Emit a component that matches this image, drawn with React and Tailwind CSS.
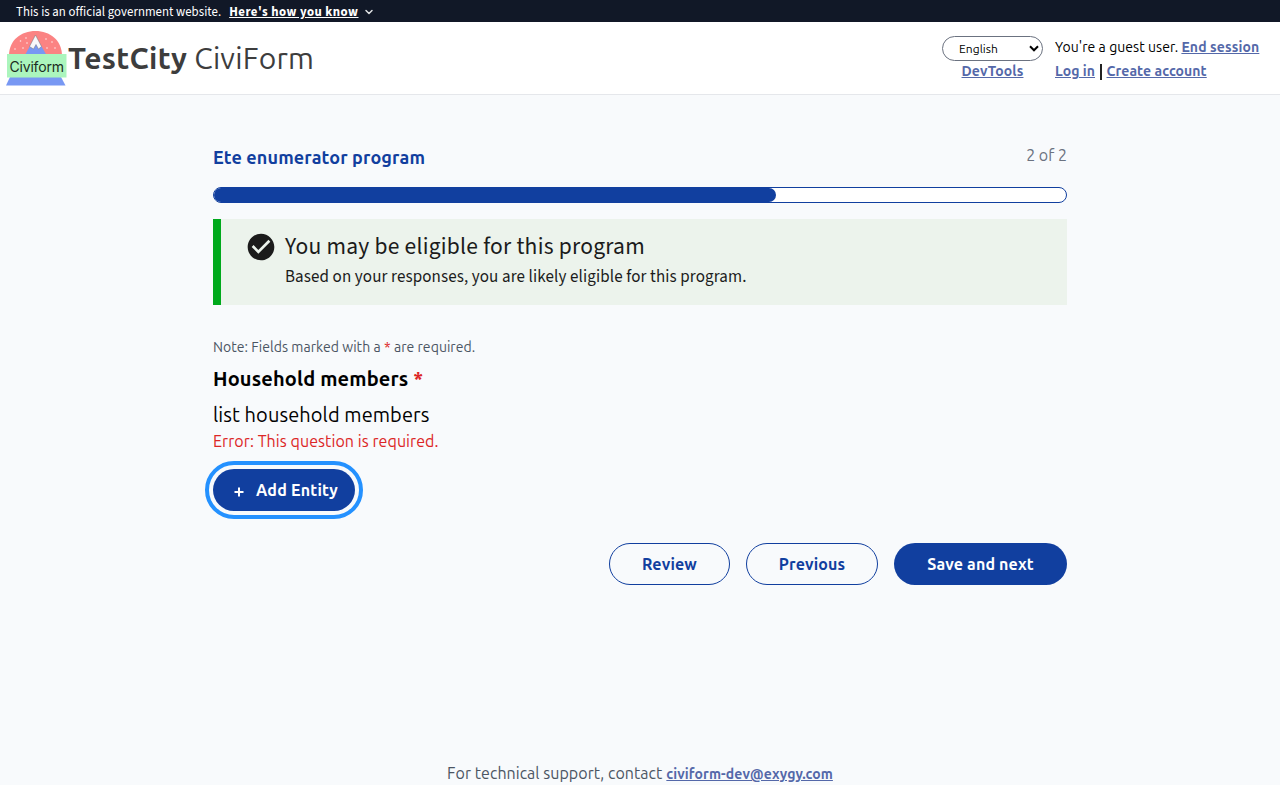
import { ChevronDown } from "lucide-react";

const source = "font-['Source_Sans_3','Noto_Sans_CJK_SC',sans-serif]";
const link = "font-bold text-[#5468a9] underline";

function Logo() {
  return (
    <svg width="62" height="58" viewBox="0 0 62 58" className="shrink-0">
      <path d="M3 25C3.300 10 15 1 29.500 1S55.500 10 56 25Z" fill="#fb8383" />
      <path d="M19 25L29.500 6L40.500 25Z" fill="#7898f3" />
      <path d="M29.500 5L35.500 16.500L32.500 19L30 14.500L27.500 19L23.500 16.500Z" fill="#f8f8fa" stroke="#777" strokeWidth=".5" />
      <g fill="#fff" opacity=".8">
        <circle cx="20" cy="8" r=".8" /><circle cx="14.500" cy="11" r=".8" /><circle cx="9" cy="19" r=".8" />
        <circle cx="17" cy="18" r=".8" /><circle cx="21" cy="13" r=".8" /><circle cx="40" cy="9" r=".8" />
        <circle cx="46" cy="12" r=".8" /><circle cx="41" cy="18" r=".8" /><circle cx="49" cy="18" r=".8" />
      </g>
      <path d="M4 47H55L59.500 55.500H0Z" fill="#7898f3" />
      <rect x="1" y="24" width="59.500" height="23.500" fill="#abf5bd" />
      <text x="3.500" y="41.500" fontSize="14" textLength="54.500" className="font-['Inter',sans-serif]" fill="#1b2b22">Civiform</text>
    </svg>
  );
}

function Banner() {
  return (
    <div className={`${source} flex h-[22px] items-center bg-[#111827] pl-4 pt-0.5 text-[12.8px] leading-none text-white`}>
      <span className="mr-2 tracking-[0.05px]">This is an official government website.</span>
      <span className="font-bold tracking-[0.48px] underline">Here's how you know</span>
      <ChevronDown className="-mt-px ml-1 size-3 text-[#dfe1e2]" strokeWidth={3} />
    </div>
  );
}

function Header() {
  return (
    <header className="flex h-[73px] items-start border-b border-[#e5e7eb] bg-white pl-[6px] pr-5">
      <div className="flex h-[73px] items-center text-[30px] text-[#3d3d3d]">
        <Logo />
        <span className="pt-0.5 font-bold tracking-[0.3px]">TestCity</span>
        <span className="ml-[7px] pt-0.5 font-[370] tracking-[0.2px]">CiviForm</span>
      </div>
      <div className="ml-auto flex gap-3 pt-[14px] text-sm">
        <div className="flex w-[101px] flex-col items-center">
          <div className="flex h-[25px] w-full items-center justify-between rounded-full border border-[#6b7280] bg-white pl-4 pr-[3px] text-xs text-black">
            <span className="font-[430] tracking-[0.05px]">English</span>
            <svg width="10" height="7" viewBox="0 0 10 7" fill="none">
              <path d="M1 1.300L5 5.300L9 1.300" stroke="#000" strokeWidth="2" />
            </svg>
          </div>
          <a className={`${link} mt-px tracking-[0.13px]`}>DevTools</a>
        </div>
        <div className="w-[205px] whitespace-nowrap">
          <div className="h-6 pt-0.5">
            <span className="font-[430] tracking-[0.05px] text-black">You're a guest user. </span>
            <a className={`${link} tracking-[0.12px]`}>End session</a>
          </div>
          <div className="flex h-6 items-center">
            <a className={`${link} tracking-[0.04px]`}>Log in</a>
            <span className="mx-[5px] h-4 w-[1.500px] bg-[#222]" />
            <a className={`${link} tracking-[0.08px]`}>Create account</a>
          </div>
        </div>
      </div>
    </header>
  );
}

function Eligibility() {
  return (
    <section className={`${source} mt-4 flex h-[86px] border-l-8 border-[#00a91c] bg-[#ecf3ec] pl-6 pt-3 text-[#1b1b1b]`}>
      <svg width="32" height="32" viewBox="0 0 24 24" fill="currentColor" className="shrink-0">
        <path d="M12 2C6.480 2 2 6.480 2 12s4.480 10 10 10 10-4.480 10-10S17.520 2 12 2zm-2 15-5-5 1.410-1.410L10 14.170l7.590-7.590L19 8l-9 9z" />
      </svg>
      <div className="ml-2 mt-px">
        <h2 className="text-[23.500px] leading-[30px] tracking-[0.25px]">You may be eligible for this program</h2>
        <p className="text-[17px] leading-[30px] tracking-[0.11px]">Based on your responses, you are likely eligible for this program.</p>
      </div>
    </section>
  );
}

export default function App() {
  return (
    <div className="flex h-[785px] flex-col overflow-hidden bg-[#f8fafc] font-['Ubuntu_Sans','Ubuntu','Noto_Sans',sans-serif]">
      <Banner />
      <Header />
      <main className="mx-auto w-[854px] pt-12">
        <div className="flex h-11 justify-between">
          <h1 className="pt-px text-lg font-bold tracking-[0.13px] text-[#113f9f]">Ete enumerator program</h1>
          <span className="pt-px font-[430] text-[#6b7280]">2 of 2</span>
        </div>
        <div className="h-4 rounded-full border border-[#113f9f] bg-white">
          <div className="h-full w-[66%] rounded-full bg-[#113f9f]" />
        </div>
        <Eligibility />
        <p className="mt-[33px] text-sm font-[430] tracking-[0.05px] text-[#4b5563]">
          Note: Fields marked with a <span className="text-[#dc2626]">*</span> are required.
        </p>
        <h2 className="mt-[7px] text-xl font-bold tracking-[0.15px] text-black">
          Household members <span className="text-[#dc2626]">*</span>
        </h2>
        <p className="mt-2 text-xl font-[430] tracking-[0.08px] text-black">list household members</p>
        <p className="mt-px text-base font-[430] tracking-[0.07px] text-[#dc2626]">Error: This question is required.</p>
        <button className="mt-[15px] flex h-[42px] w-[142px] items-center rounded-full bg-[#113f9f] pl-[21px] pt-0.5 font-bold text-white outline-4 outline-offset-4 outline-[#2491ff]">
          <svg width="10" height="10" viewBox="0 0 10 10" className="mt-px" stroke="currentColor" strokeWidth="2">
            <path d="M5 0.500V9.500M0.500 5H9.500" />
          </svg>
          <span className="ml-3 tracking-[0.22px]">Add Entity</span>
        </button>
        <div className="mt-8 flex justify-end gap-4 font-bold tracking-[0.14px] text-[#113f9f]">
          <button className="h-[42px] w-[121px] rounded-full border border-[#113f9f] pt-0.5">Review</button>
          <button className="h-[42px] w-[132px] rounded-full border border-[#113f9f] pt-0.5">Previous</button>
          <button className="h-[42px] w-[173px] rounded-full bg-[#113f9f] pt-0.5 text-white">Save and next</button>
        </div>
      </main>
      <footer className="mt-auto flex h-[23px] items-baseline justify-center gap-1 text-[#4b5563]">
        <span className="font-[430] tracking-[0.04px]">For technical support, contact</span>
        <a className={`${link} text-sm tracking-[0.1px]`}>civiform-dev@exygy.com</a>
      </footer>
    </div>
  );
}
